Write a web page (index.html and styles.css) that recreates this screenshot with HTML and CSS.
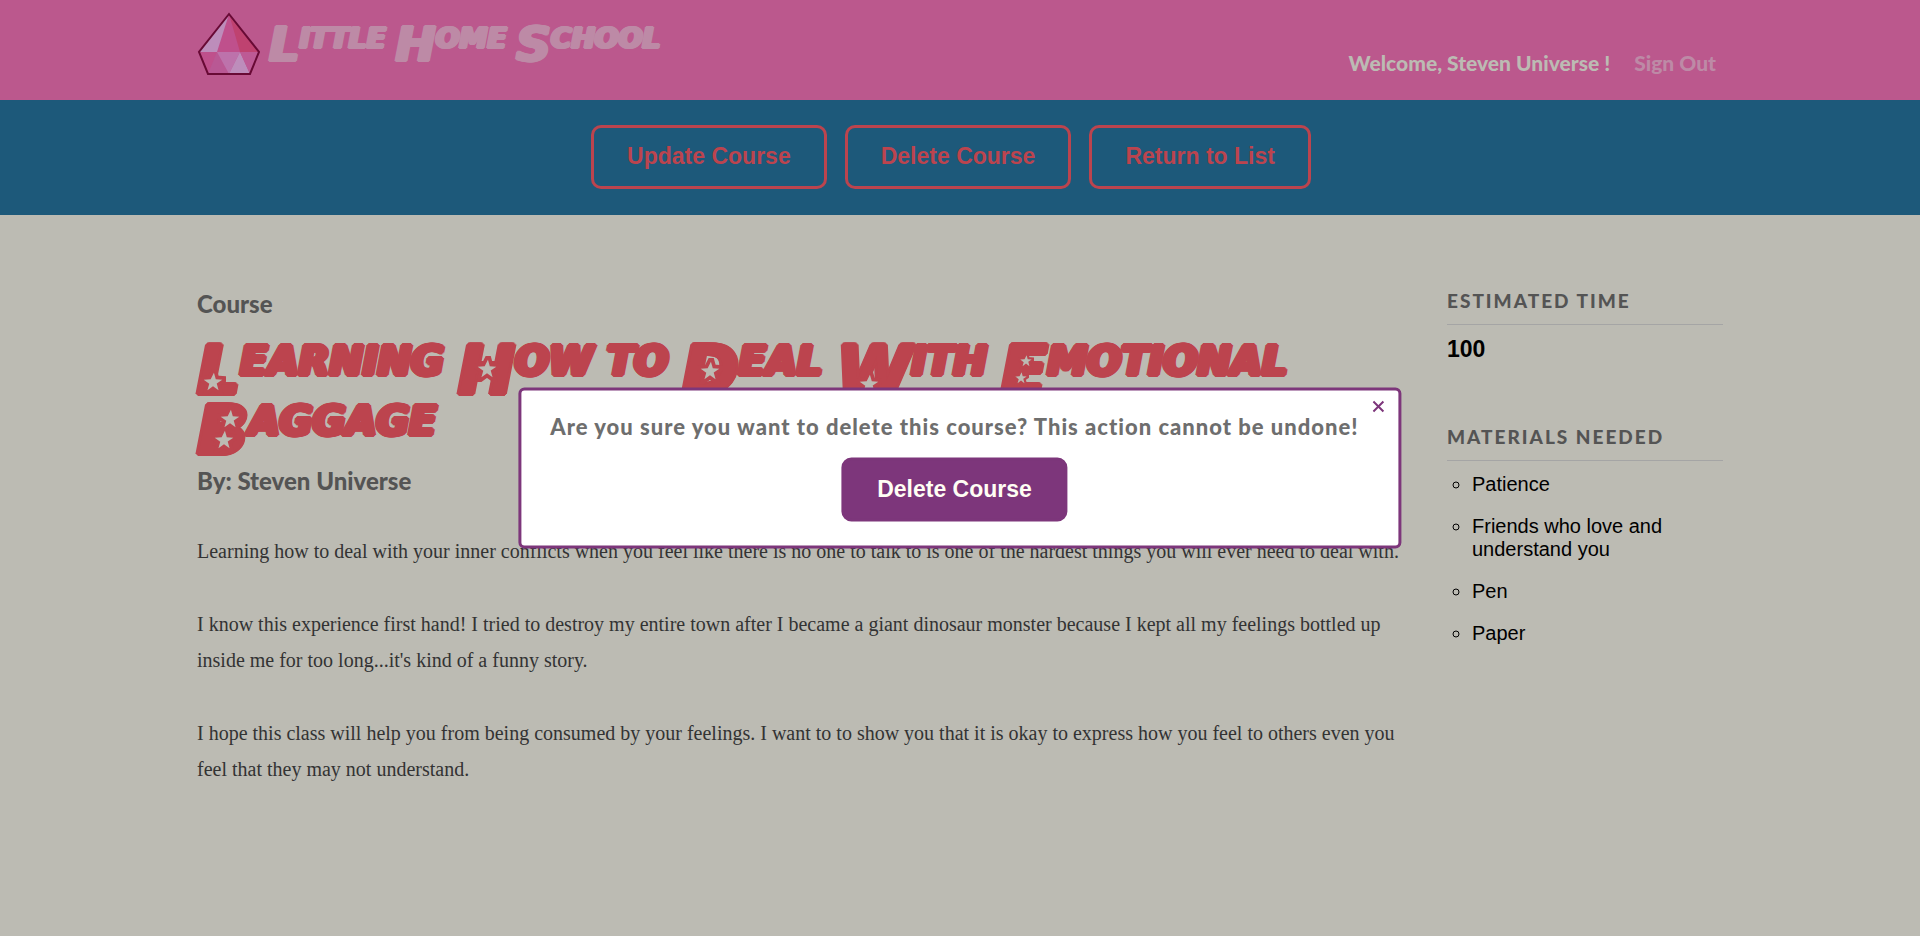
FILE: index.html
```
<!DOCTYPE html>
<html lang="en">
<head>
<meta charset="utf-8">
<title>Little Home School</title>
<link rel="stylesheet" href="styles.css">
</head>
<body>
<svg class="defs" aria-hidden="true"><symbol id="star" viewBox="-4 -4 28 28"><path d="M11 0l2 7 7 .5-6 4L16 19l-6-4.500L4 19l2-7L0 7.500 7.500 7z"/></symbol></svg>
<header class="header">
  <div class="wrap header-row">
    <a class="brand" href="#">
      <svg class="gem" viewBox="0 0 64 64" aria-hidden="true">
        <path fill="#bf508c" d="M32 2 2 40l9 22h42l9-22z"/>
        <path fill="#bd8dbb" d="M32 2 2 40h18z"/>
        <path fill="#bf4270" d="M32 2 62 40H43z"/>
        <path fill="#b95894" d="M20 40 11 62h21z"/>
        <path fill="#bd72ab" d="M20 40h23L32 62z"/>
        <path fill="#bd8dbb" d="M43 40 32 62h21z"/>
        <path fill="#bd5a95" d="M43 40h19l-9 22z"/>
        <path fill="none" stroke="#680a35" stroke-width="2" d="M32 2 2 40l9 22h42l9-22z"/>
      </svg>
      <span class="display logo-text"><span class="word cap">Little</span> <span class="word cap">Home</span> <span class="word cap">School</span></span>
    </a>
    <nav class="account">
      <span>Welcome, Steven Universe !</span>
      <a class="signout" href="#">Sign Out</a>
    </nav>
  </div>
</header>
<div class="actions">
  <button class="button">Update Course</button>
  <button class="button">Delete Course</button>
  <button class="button">Return to List</button>
</div>
<main class="wrap course">
  <article>
    <h2 class="label">Course</h2>
    <h1 class="display title"><span class="word cap">Learning<svg class="star s-l"><use href="#star"/></svg></span> <span class="word cap">How<svg class="star s-h"><use href="#star"/></svg></span> <span class="word">to</span> <span class="word cap">Deal<svg class="star s-d"><use href="#star"/></svg></span> <span class="word cap">With<svg class="star s-w"><use href="#star"/></svg></span> <span class="word cap">Emotional<svg class="star small s-e1"><use href="#star"/></svg><svg class="star small s-e2"><use href="#star"/></svg></span> <span class="word cap">Baggage<svg class="star s-b1"><use href="#star"/></svg><svg class="star s-b2"><use href="#star"/></svg></span></h1>
    <h2 class="label">By: Steven Universe</h2>
    <div class="description">
      <p>Learning how to deal with your inner conflicts when you feel like there is no one to talk to is one of the hardest things you will ever need to deal with.</p>
      <p>I know this experience first hand! I tried to destroy my entire town after I became a giant dinosaur monster because I kept all my feelings bottled up inside me for too long...it's kind of a funny story.</p>
      <p>I hope this class will help you from being consumed by your feelings. I want to to show you that it is okay to express how you feel to others even you feel that they may not understand.</p>
    </div>
  </article>
  <aside>
    <h3 class="side-title">Estimated Time</h3>
    <p class="time">100</p>
    <h3 class="side-title">Materials Needed</h3>
    <ul class="materials">
      <li>Patience</li>
      <li>Friends who love and understand you</li>
      <li>Pen</li>
      <li>Paper</li>
    </ul>
  </aside>
</main>
<div class="modal" role="dialog" aria-labelledby="confirm">
  <button class="close" aria-label="Close"><svg viewBox="0 0 12 14" aria-hidden="true"><path d="M1 2l10 10M11 2 1 12"/></svg></button>
  <h3 class="question" id="confirm">Are you sure you want to delete this course? This action cannot be undone!</h3>
  <button class="button filled">Delete Course</button>
</div>
</body>
</html>
```
FILE: styles.css
```
* { box-sizing: border-box; }
body {
  margin: 0;
  background: #bcbbb3;
  color: #000;
  font-family: "Liberation Sans", Arial, sans-serif;
}
h1, h2, h3, p, ul { margin: 0; padding: 0; }
.defs { display: none; }
.wrap { width: 80%; margin: 0 auto; padding: 0 5px; }

.header { background: #bb588d; }
.header-row { display: flex; justify-content: space-between; height: 100px; }
.brand { display: flex; gap: 8px; padding-top: 12px; color: #bd8aa6; text-decoration: none; }
.gem { width: 64px; height: 64px; }
.account {
  display: flex;
  gap: 24px;
  padding: 50px 7px 0 0;
  color: #bcbbb3;
  font: 900 21px/26px Lato, sans-serif;
}
.signout { color: #bd8aa6; text-decoration: none; }

.display {
  font-family: "DejaVu Sans", sans-serif;
  font-style: italic;
  font-weight: bold;
  text-transform: uppercase;
}
.word { position: relative; display: inline-block; }
.logo-text {
  font-size: 28px;
  line-height: 54px;
  text-shadow: 2px 0, -2px 0, 0 1px, 0 -1px, 1px 1px, -1px -1px, 1px -1px, -1px 1px;
}
.logo-text .cap::first-letter { font-size: 48px; line-height: 1px; vertical-align: -13px; }

.actions {
  display: flex;
  justify-content: center;
  padding: 25px 0 26px;
  background: #1d597a;
}
.button {
  height: 64px;
  margin-right: 18px;
  padding: 0 33px 1px;
  border: 3px solid #bc444e;
  border-radius: 10px;
  background: transparent;
  color: #bc444e;
  font: bold 23px "Liberation Sans", Arial, sans-serif;
}

.course { display: grid; grid-template-columns: 1fr 276px; gap: 36px; padding-top: 74px; }
.label { color: #545454; font: 900 24px/30px Lato, sans-serif; }
.title {
  margin: 12px 0 15px;
  color: #bc444e;
  font-size: 40px;
  line-height: 60px;
  text-shadow: 3px 0, -3px 0, 0 2px, 0 -2px, 2px 1px, -2px -1px, 2px -1px, -2px 1px, 1px 2px, -1px 2px, 1px -2px, -1px -2px;
}
.title .cap::first-letter { font-size: 68px; line-height: 1px; vertical-align: -19px; }
.star {
  position: absolute;
  width: 26px;
  height: 26px;
  fill: #bcbbb3;
  stroke: #bc444e;
  stroke-width: 8px;
  paint-order: stroke;
}
.small { width: 16px; height: 16px; }
.s-l { left: 3px; top: 38px; }
.s-h { left: 16px; top: 25px; }
.s-d { left: 15px; top: 27px; }
.s-w { left: 20px; top: 40px; }
.s-e1 { left: 17px; top: 22px; }
.s-e2 { left: 12px; top: 39px; }
.s-b1 { left: 20px; top: 15px; }
.s-b2 { left: 14px; top: 36px; }

.description {
  margin-top: 37px;
  color: #333;
  font: 20px/36px "Liberation Serif", "Times New Roman", serif;
}
.description p + p { margin-top: 37px; }

.side-title {
  padding-bottom: 11px;
  border-bottom: 1px solid #a5a5a5;
  color: #545454;
  font: 900 19px/24px Lato, sans-serif;
  letter-spacing: 2px;
  text-transform: uppercase;
}
.time { margin: 11px 0 63px; font-size: 23px; font-weight: bold; line-height: 26px; }
.materials { padding: 12px 0 0 25px; list-style: circle; font-size: 20px; line-height: 23px; }
.materials li { margin-bottom: 19px; }

.modal {
  position: fixed;
  top: 50%;
  left: 50%;
  transform: translate(-50%, -50%);
  display: flex;
  flex-direction: column;
  align-items: center;
  width: 46%;
  padding: 21px 35px 24px 24px;
  border: 3px solid #7d367b;
  border-radius: 6px;
  background: #fff;
}
.close {
  position: absolute;
  top: 7px;
  right: 12px;
  width: 16px;
  height: 18px;
  padding: 2px;
  border: 0;
  background: none;
}
.close svg { display: block; width: 12px; height: 14px; fill: none; stroke: #7d367b; stroke-width: 2; }
.question {
  color: #6e6e6e;
  font: 900 22px/30px Lato, sans-serif;
  letter-spacing: 1px;
  white-space: nowrap;
}
.filled { margin: 16px 0 0; border-color: #7d367b; background: #7d367b; color: #fffef4; }
```
